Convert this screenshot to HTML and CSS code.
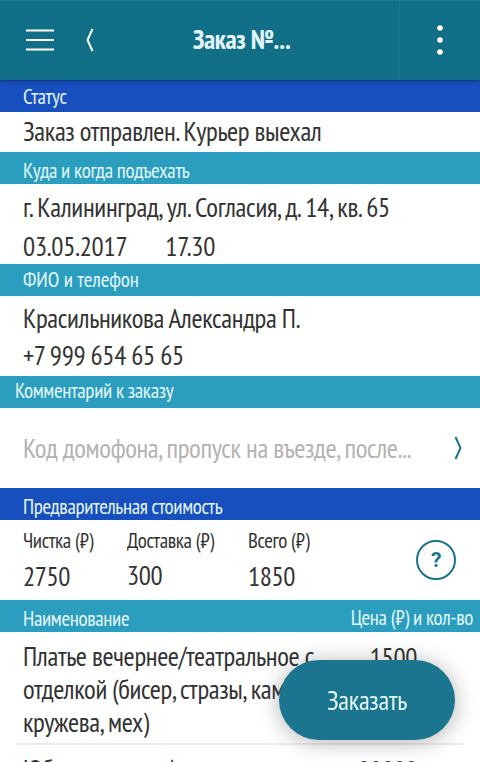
FILE: index.html
```html
<!DOCTYPE html>
<html lang="ru">
<head>
  <meta charset="UTF-8">
  <title>Заказ</title>
  <link rel="stylesheet" href="styles.css">
</head>
<body>

  <header class="topbar">
    <button class="icon menu" type="button" aria-label="Меню">
      <svg width="28" height="24" viewBox="0 0 28 24"><path d="M0 2.5h28M0 12h28M0 21.5h28"/></svg>
    </button>
    <button class="icon back" type="button" aria-label="Назад">
      <svg width="8" height="24" viewBox="0 0 8 24"><path d="M6.5 1L1.5 12l5 11"/></svg>
    </button>
    <h1>Заказ №...</h1>
    <button class="icon more" type="button" aria-label="Ещё">
      <svg width="6" height="32" viewBox="0 0 6 32"><circle cx="3" cy="4" r="2.8"/><circle cx="3" cy="16" r="2.8"/><circle cx="3" cy="28" r="2.8"/></svg>
    </button>
  </header>

  <main>
    <h2 class="bar blue status-bar">Статус</h2>
    <div class="status">Заказ отправлен. Курьер выехал</div>

    <h2 class="bar address-bar">Куда и когда подъехать</h2>
    <div class="address">
      <p>г. Калининград, ул. Согласия, д. 14, кв. 65</p>
      <p class="when"><span>03.05.2017</span><span>17.30</span></p>
    </div>

    <h2 class="bar person-bar">ФИО и телефон</h2>
    <div class="person">
      <p>Красильникова Александра П.</p>
      <p>+7 999 654 65 65</p>
    </div>

    <h2 class="bar comment-bar">Комментарий к заказу</h2>
    <div class="comment">
      <span>Код домофона, пропуск на въезде, после...</span>
      <svg width="8" height="24" viewBox="0 0 8 24"><path d="M1.5 1l5 11-5 11"/></svg>
    </div>

    <h2 class="bar blue cost-bar">Предварительная стоимость</h2>
    <div class="cost">
      <dl class="cleaning"><dt>Чистка (₽)</dt><dd>2750</dd></dl>
      <dl class="delivery"><dt>Доставка (₽)</dt><dd>300</dd></dl>
      <dl class="total"><dt>Всего (₽)</dt><dd>1850</dd></dl>
      <button class="help" type="button">?</button>
    </div>

    <h2 class="bar items-bar"><span>Наименование</span><span class="price-title">Цена (₽) и кол-во</span></h2>
    <ul class="items">
      <li>
        <span class="name">Платье вечернее/театральное с отделкой (бисер, стразы, камни, кружева, мех)</span>
        <span class="price">1500</span>
      </li>
      <li>
        <span class="name">Юбка вечерняя/</span>
        <span class="price">20000</span>
      </li>
    </ul>
  </main>

  <button class="order" type="button">Заказать</button>

</body>
</html>
```
FILE: styles.css
```css
* {
  box-sizing: border-box;
}

body {
  margin: 0;
  height: 762px;
  overflow: hidden;
  background: #fff;
  color: #333;
  font-family: "PT Sans Narrow", "Open Sans", sans-serif;
  font-stretch: 75%;
  font-size: 27px;
  line-height: 34px;
  letter-spacing: -0.36px;
}

main {
  height: 682px;
  overflow: hidden;
}

h1, h2, p, dl, dd, ul {
  margin: 0;
  padding: 0;
}

button {
  padding: 0;
  border: none;
  background: none;
  font: inherit;
  letter-spacing: inherit;
  cursor: pointer;
}

svg {
  display: block;
  fill: none;
  stroke: #fff;
  stroke-width: 2;
}

/* header */
.topbar {
  position: relative;
  z-index: 1;
  display: flex;
  align-items: center;
  height: 80px;
  background: #126f88;
  box-shadow: inset 0 1px #23798f, 0 1px 3px rgba(0, 0, 0, 0.4);
}

.icon {
  display: flex;
  align-items: center;
  justify-content: center;
  height: 100%;
}

.menu {
  width: 80px;
}

.back {
  width: 20px;
}

.topbar h1 {
  flex: 1;
  padding: 0 16px 2px 0;
  text-align: center;
  color: #e3f4fa;
  font-size: 27px;
  font-weight: bold;
}

.more {
  width: 81px;
  border-left: 1px solid #1b758d;
}

.more svg {
  fill: #fff;
  stroke: none;
}

/* section titles */
.bar {
  display: flex;
  justify-content: space-between;
  height: 32px;
  padding: 0 7px 0 23px;
  background: #2b9ebf;
  color: #e3f6fb;
  font-size: 21px;
  font-weight: normal;
  line-height: 32px;
}

.blue {
  background: #184fbe;
}

.status-bar {
  padding-top: 1px;
}

.address-bar,
.cost-bar,
.items-bar {
  padding-top: 3px;
}

.person-bar {
  letter-spacing: 0;
}

.comment-bar {
  padding-left: 15px;
  line-height: 30px;
}

.price-title {
  margin-top: -1px;
}

/* order data */
.status {
  height: 40px;
  padding: 2px 23px;
}

.address {
  height: 80px;
  padding: 6px 23px 0;
  letter-spacing: -0.3px;
}

.when {
  display: flex;
  gap: 38px;
  padding-top: 5px;
  letter-spacing: -0.25px;
}

.person {
  height: 80px;
  padding: 5px 23px 0;
}

.person p + p {
  padding-top: 3px;
}

.comment {
  display: flex;
  align-items: center;
  justify-content: space-between;
  height: 80px;
  padding: 0 18px 0 23px;
  color: #b3b3b3;
}

.comment svg {
  stroke: #19758f;
}

/* cost */
.cost {
  display: flex;
  height: 80px;
  padding: 8px 24px 0 23px;
}

.cost dt {
  font-size: 21px;
  line-height: 26px;
}

.cost dd {
  padding-top: 5px;
}

.cleaning {
  width: 104px;
}

.delivery {
  width: 121px;
}

.delivery dd {
  padding-top: 4px;
}

.help {
  width: 40px;
  height: 40px;
  margin: 12px 0 0 auto;
  border: 2px solid #19758f;
  border-radius: 50%;
  color: #19758f;
  font: bold 21px/36px Roboto, sans-serif;
}

/* items */
.items {
  padding: 0 16px;
  list-style: none;
}

.items li {
  display: flex;
  justify-content: space-between;
  height: 113px;
  padding: 8px 47px 0 7px;
  border-bottom: 2px solid #ebebeb;
  line-height: 33px;
}

.name {
  width: 300px;
}

.price {
  padding-top: 1px;
}

.order {
  position: fixed;
  top: 660px;
  left: 279px;
  width: 176px;
  height: 80px;
  border-radius: 40px;
  background: #1b758f;
  color: #e3f6fb;
  box-shadow: 0 2px 22px rgba(0, 0, 0, 0.3);
}
```
